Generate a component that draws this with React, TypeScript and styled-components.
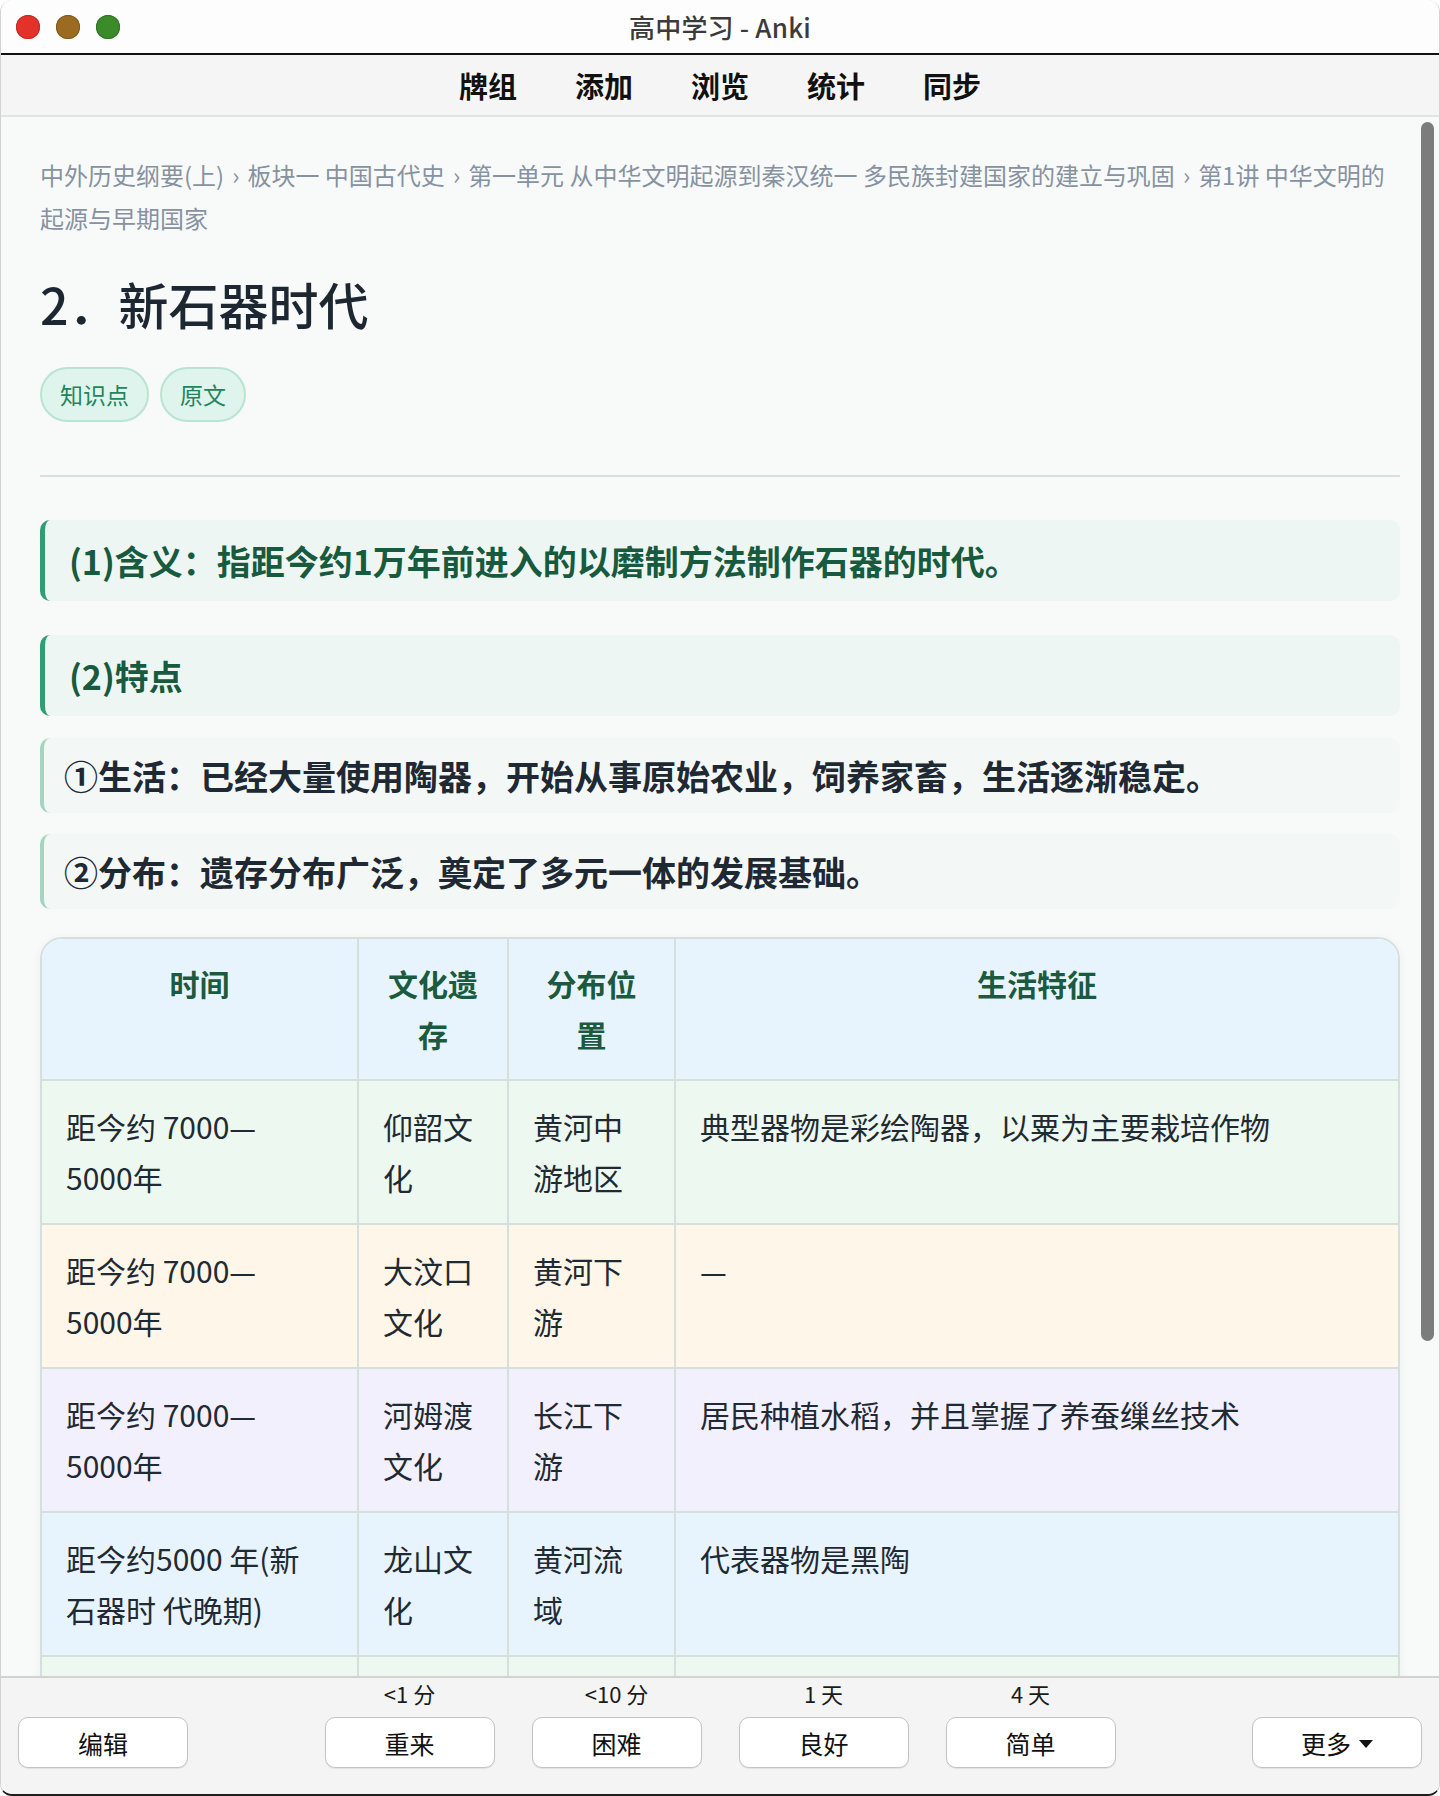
import React from "react";
import styled, { createGlobalStyle } from "styled-components";

const FONT = `"Noto Sans CJK SC", "Noto Sans", "Liberation Sans", sans-serif`;

const GlobalStyle = createGlobalStyle`
  html, body {
    margin: 0;
    padding: 0;
    background: #ffffff;
  }
  body {
    font-family: ${FONT};
    -webkit-font-smoothing: antialiased;
  }
  * { box-sizing: border-box; }
`;

type Tone = "head" | "green" | "cream" | "violet" | "blue";

const toneBg: Record<Tone, string> = {
  head: "#e8f4fd",
  green: "#edf8f0",
  cream: "#fef6e9",
  violet: "#f3f0fe",
  blue: "#e8f4fd",
};

interface Row {
  id: number;
  tone: Tone;
  cells: [string, string, string, string];
}

const rows: Row[] = [
  { id: 1, tone: "green", cells: ["距今约 7000—5000年", "仰韶文化", "黄河中游地区", "典型器物是彩绘陶器，以粟为主要栽培作物"] },
  { id: 2, tone: "cream", cells: ["距今约 7000—5000年", "大汶口文化", "黄河下游", "—"] },
  { id: 3, tone: "violet", cells: ["距今约 7000—5000年", "河姆渡文化", "长江下游", "居民种植水稻，并且掌握了养蚕缫丝技术"] },
  { id: 4, tone: "blue", cells: ["距今约5000 年(新石器时 代晚期)", "龙山文化", "黄河流域", "代表器物是黑陶"] },
  { id: 5, tone: "green", cells: ["距今约5300—4300年", "良渚文化", "长江下游", "玉器制作精美，出现大型祭坛"] },
];

const columns = [
  { key: "time", label: "时间", width: 317 },
  { key: "culture", label: "文化遗存", width: 150 },
  { key: "place", label: "分布位置", width: 167 },
  { key: "life", label: "生活特征", width: undefined },
];

const crumbs = [
  "中外历史纲要(上)",
  "板块一 中国古代史",
  "第一单元 从中华文明起源到秦汉统一 多民族封建国家的建立与巩固",
  "第1讲 中华文明的起源与早期国家",
];

const answers = [
  { label: "重来", due: "<1 分" },
  { label: "困难", due: "<10 分" },
  { label: "良好", due: "1 天" },
  { label: "简单", due: "4 天" },
];

/* ---------- window chrome ---------- */

const Window = styled.div`
  width: 1440px;
  height: 1796px;
  display: flex;
  flex-direction: column;
  border-radius: 12px;
  overflow: hidden;
  border-left: 1px solid #d2d2d2;
  border-right: 1px solid #d2d2d2;
  border-bottom: 2px solid #1d1d1d;
  background: #f8fafa;
`;

const TitleBar = styled.header`
  height: 55px;
  flex-shrink: 0;
  display: grid;
  grid-template-columns: 1fr auto 1fr;
  align-items: center;
  padding: 0 15px;
  background: #fdfdfd;
  border-bottom: 2px solid #111111;
`;

const Lights = styled.div`
  display: flex;
  gap: 16px;
`;

const Light = styled.span<{ $color: string; $ring: string }>`
  width: 24px;
  height: 24px;
  border-radius: 50%;
  background: ${(p) => p.$color};
  box-shadow: inset 0 0 0 1px ${(p) => p.$ring};
`;

const WindowTitle = styled.div`
  font-size: 26px;
  font-weight: 500;
  color: #3b3b3b;
  letter-spacing: 0.2px;
`;

const Toolbar = styled.nav`
  height: 62px;
  flex-shrink: 0;
  display: flex;
  align-items: center;
  justify-content: center;
  gap: 58px;
  background: #f5f5f5;
  border-bottom: 2px solid #e3e3e3;
`;

const NavLink = styled.span`
  font-size: 29px;
  font-weight: 700;
  color: #111111;
  line-height: 1;
`;

/* ---------- reviewer ---------- */

const Main = styled.main`
  flex: 1;
  min-height: 0;
  display: flex;
`;

const Content = styled.div`
  flex: 1;
  min-width: 0;
  overflow: hidden;
  padding: 36px 18px 0 39px;
`;

const ScrollRail = styled.div`
  width: 21px;
  flex-shrink: 0;
  padding: 5px 5px 0 3px;
`;

const Thumb = styled.div<{ $height: number }>`
  height: ${(p) => p.$height}px;
  border-radius: 7px;
  background: #7c7c7c;
`;

const Breadcrumb = styled.div`
  font-size: 24px;
  line-height: 43px;
  color: #8792a0;
`;

const Sep = styled.span`
  margin: 0 8px;
`;

const Heading = styled.h1`
  margin: 32px 0 0;
  font-size: 50px;
  line-height: 64px;
  font-weight: 500;
  color: #1c2731;
`;

const Tags = styled.div`
  display: flex;
  gap: 11px;
  margin-top: 32px;
`;

const Tag = styled.span`
  display: inline-block;
  padding: 9px 18px;
  font-size: 23px;
  line-height: 33px;
  color: #23855c;
  background: #dff4ec;
  border: 2px solid #b9e4d3;
  border-radius: 999px;
`;

const Divider = styled.hr`
  margin: 53px 0 0;
  border: 0;
  height: 2px;
  background: #d6e2de;
`;

const Block = styled.div<{ $level: 1 | 2; $gap: number }>`
  margin-top: ${(p) => p.$gap}px;
  padding: ${(p) => (p.$level === 1 ? "20px 24px" : "17px 20px")};
  font-size: 34px;
  line-height: 41px;
  font-weight: 700;
  border-radius: 10px;
  border-left: ${(p) => (p.$level === 1 ? "5px solid #2f9e72" : "4px solid #a3d5c0")};
  background: ${(p) => (p.$level === 1 ? "#edf6f3" : "#f3f8f7")};
  color: ${(p) => (p.$level === 1 ? "#175a3e" : "#1f2933")};
`;

const TableWrap = styled.div`
  margin-top: 28px;
  border: 2px solid #d5e0dc;
  border-radius: 22px;
  overflow: hidden;
  box-shadow: 0 2px 10px rgba(30, 60, 50, 0.06);
  margin-bottom: 40px;
`;

const Table = styled.table`
  width: 100%;
  table-layout: fixed;
  border-collapse: separate;
  border-spacing: 0;
`;

const Th = styled.th<{ $width?: number }>`
  box-sizing: border-box;
  width: ${(p) => (p.$width ? `${p.$width}px` : "auto")};
  padding: 19px 24px 19px;
  font-size: 30px;
  line-height: 51px;
  font-weight: 700;
  color: #1b5a3f;
  text-align: center;
  vertical-align: top;
  background: ${toneBg.head};
  border-bottom: 2px solid #d5e0dc;
  border-right: 2px solid #d5e0dc;
  &:last-child { border-right: 0; }
`;

const Td = styled.td<{ $tone: Tone; $wide?: boolean }>`
  box-sizing: border-box;
  padding: 20px ${(p) => (p.$wide ? "44px" : "24px")} 20px 24px;
  font-size: 30px;
  line-height: 51px;
  color: #1f2a33;
  vertical-align: top;
  background: ${(p) => toneBg[p.$tone]};
  border-bottom: 2px solid #d5e0dc;
  border-right: 2px solid #d5e0dc;
  &:last-child { border-right: 0; }
`;

/* ---------- answer bar ---------- */

const BottomBar = styled.footer`
  height: 118px;
  flex-shrink: 0;
  display: grid;
  grid-template-columns: 1fr auto 1fr;
  align-items: end;
  padding: 0 17px 26px;
  background: #f4f4f4;
  border-top: 2px solid #d2d2d2;
`;

const Answers = styled.div`
  display: flex;
  gap: 37px;
`;

const AnswerCol = styled.div`
  display: flex;
  flex-direction: column;
  align-items: center;
  gap: 10px;
`;

const Due = styled.span`
  font-size: 22px;
  line-height: 28px;
  color: #1a1a1a;
`;

const Button = styled.button<{ $align?: "start" | "end" }>`
  justify-self: ${(p) => p.$align ?? "center"};
  width: 170px;
  height: 51px;
  display: inline-flex;
  align-items: center;
  justify-content: center;
  gap: 8px;
  font-family: ${FONT};
  font-size: 25px;
  color: #111111;
  background: #ffffff;
  border: 1.5px solid #c3c3c3;
  border-radius: 10px;
  box-shadow: 0 1px 1px rgba(0, 0, 0, 0.08);
  padding: 0;
`;

const Caret = styled.span`
  width: 0;
  height: 0;
  border-left: 7px solid transparent;
  border-right: 7px solid transparent;
  border-top: 8px solid #111111;
  margin-top: 3px;
`;

const App: React.FC = () => (
  <>
    <GlobalStyle />
    <Window>
      <TitleBar>
        <Lights>
          <Light $color="#e2322a" $ring="#c42a22" />
          <Light $color="#9c6b22" $ring="#84591b" />
          <Light $color="#3b8b2b" $ring="#2f7522" />
        </Lights>
        <WindowTitle>高中学习 - Anki</WindowTitle>
        <span />
      </TitleBar>

      <Toolbar>
        {["牌组", "添加", "浏览", "统计", "同步"].map((item) => (
          <NavLink key={item}>{item}</NavLink>
        ))}
      </Toolbar>

      <Main>
        <Content>
          <Breadcrumb>
            {crumbs.map((c, i) => (
              <React.Fragment key={c}>
                {i > 0 && <Sep>›</Sep>}
                {c}
              </React.Fragment>
            ))}
          </Breadcrumb>

          <Heading>2．新石器时代</Heading>

          <Tags>
            <Tag>知识点</Tag>
            <Tag>原文</Tag>
          </Tags>

          <Divider />

          <Block $level={1} $gap={43}>(1)含义：指距今约1万年前进入的以磨制方法制作石器的时代。</Block>
          <Block $level={1} $gap={34}>(2)特点</Block>
          <Block $level={2} $gap={22}>①生活：已经大量使用陶器，开始从事原始农业，饲养家畜，生活逐渐稳定。</Block>
          <Block $level={2} $gap={21}>②分布：遗存分布广泛，奠定了多元一体的发展基础。</Block>

          <TableWrap>
            <Table>
              <thead>
                <tr>
                  {columns.map((col) => (
                    <Th key={col.key} $width={col.width}>
                      {col.label}
                    </Th>
                  ))}
                </tr>
              </thead>
              <tbody>
                {rows.map((row) => (
                  <tr key={row.id}>
                    {row.cells.map((cell, i) => (
                      <Td key={i} $tone={row.tone} $wide={i === 0}>
                        {cell}
                      </Td>
                    ))}
                  </tr>
                ))}
              </tbody>
            </Table>
          </TableWrap>
        </Content>
        <ScrollRail>
          <Thumb $height={1219} />
        </ScrollRail>
      </Main>

      <BottomBar>
        <Button $align="start">编辑</Button>
        <Answers>
          {answers.map((a) => (
            <AnswerCol key={a.label}>
              <Due>{a.due}</Due>
              <Button>{a.label}</Button>
            </AnswerCol>
          ))}
        </Answers>
        <Button $align="end">
          更多
          <Caret />
        </Button>
      </BottomBar>
    </Window>
  </>
);

export default App;
